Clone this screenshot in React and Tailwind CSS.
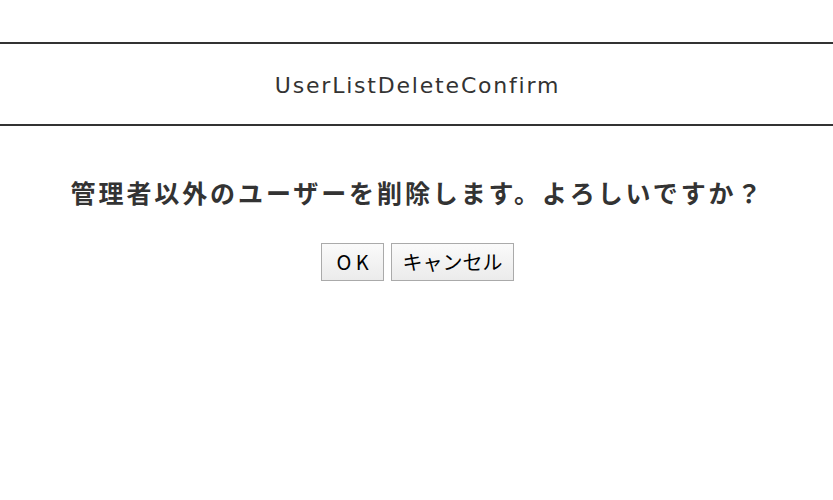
import React from "react";

const App = () => {
	return (
		<div className="w-[833px] h-[500px] bg-white text-[#333]" style={{ fontFamily: '"DejaVu Sans", "Noto Sans CJK JP", sans-serif' }}>
			<div className="pt-[42px]">
				<div className="border-t-2 border-b-2 border-[#333] h-[84px] flex items-center justify-center">
					<h1 className="text-[22px] tracking-[1.8px] text-[#333] pl-[2px] pt-[2px]">UserListDeleteConfirm</h1>
				</div>
			</div>

			<div className="flex flex-col items-center mt-[48px]">
				<p className="text-[25px] font-bold tracking-[2.9px] text-[#333] pl-[2px]" style={{ fontFamily: '"Noto Sans CJK JP", sans-serif' }}>
					管理者以外のユーザーを削除します。よろしいですか？
				</p>
				<div className="flex gap-[7px] mt-[31px] pl-[2px]">
					<button className="w-[63px] h-[38px] border border-[#aaa] bg-gradient-to-b from-[#fafafa] to-[#ebebeb] text-[20px] text-black" style={{ fontFamily: '"Noto Sans CJK JP", sans-serif' }}>
						O K
					</button>
					<button className="w-[123px] h-[38px] border border-[#aaa] bg-gradient-to-b from-[#fafafa] to-[#ebebeb] text-[20px] text-black" style={{ fontFamily: '"Noto Sans CJK JP", sans-serif' }}>
						キャンセル
					</button>
				</div>
			</div>
		</div>
	);
};

export default App;
